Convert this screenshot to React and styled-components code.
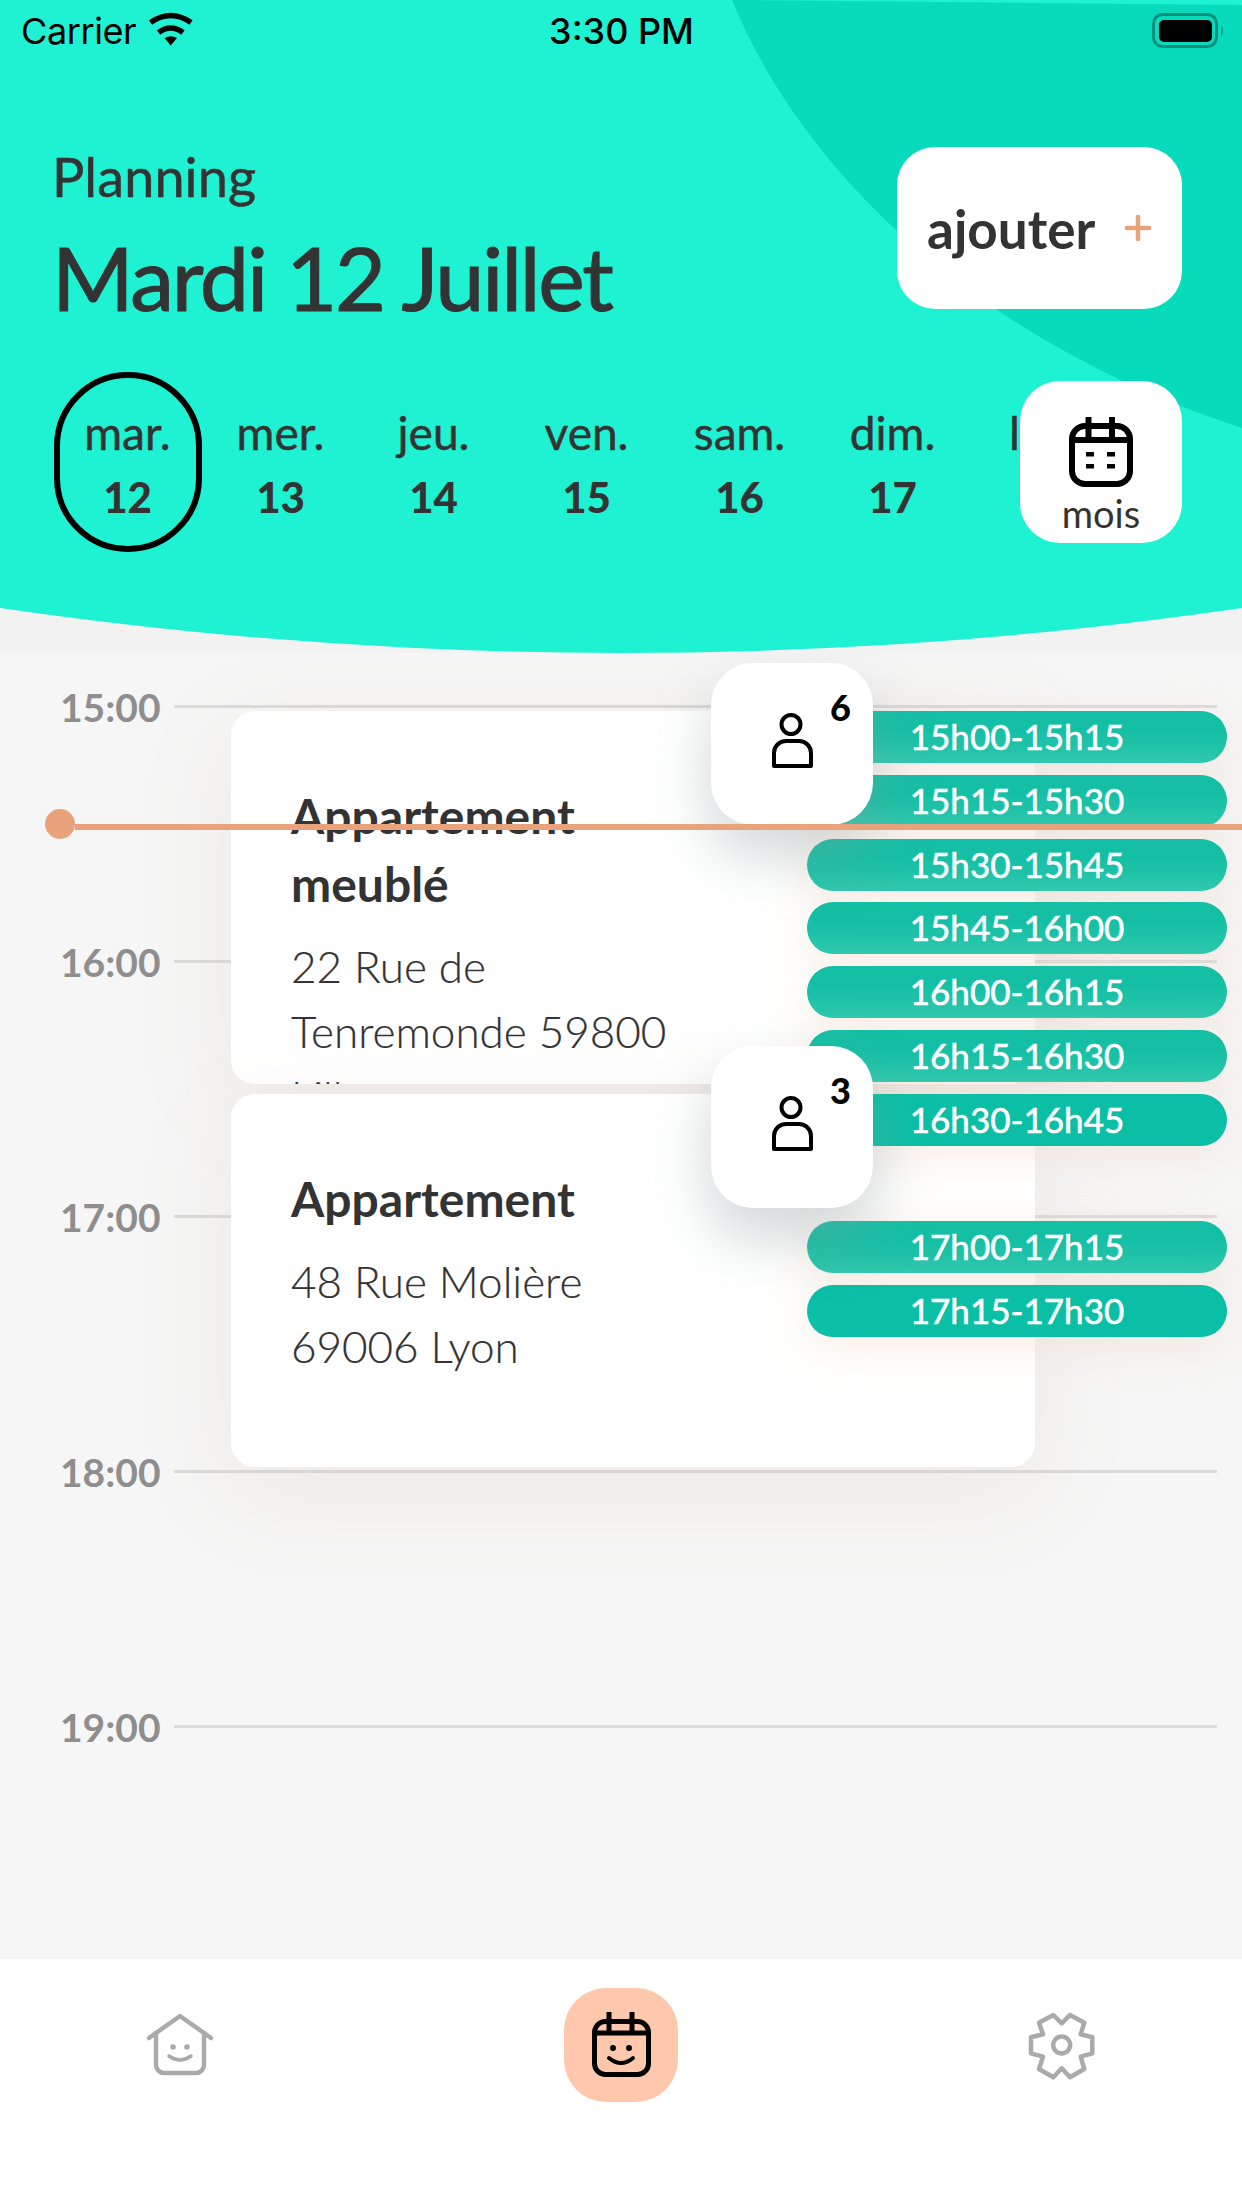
import React from "react";
import styled, { createGlobalStyle } from "styled-components";

const Global = createGlobalStyle`
  html, body { margin: 0; padding: 0; background: #f6f6f6; }
  * { box-sizing: border-box; }
  #root { width: 1242px; height: 2208px; }
`;

const Page = styled.div`
  width: 1242px;
  height: 2208px;
  display: flex;
  flex-direction: column;
  overflow: hidden;
  background: #f2f2f2;
  font-family: "Lato", "Noto Sans", sans-serif;
  color: #333;
`;

const Header = styled.header`
  position: relative;
  height: 653px;
  flex: none;
  background: #1ef2d2;
  clip-path: circle(4307px at 621px -3654px);
`;

const HeaderArc = styled.svg`
  position: absolute;
  top: 0;
  left: 0;
  width: 1242px;
  height: 652px;
`;

const HeaderContent = styled.div`
  position: relative;
  display: flex;
  flex-direction: column;
`;

const StatusBar = styled.div`
  height: 60px;
  display: grid;
  grid-template-columns: 1fr auto 1fr;
  align-items: center;
  padding: 2px 16px 0 17px;
  font-family: "Inter", "Liberation Sans", sans-serif;
  font-size: 36px;
  color: #000;
`;

const StatusLeft = styled.div`
  display: flex;
  align-items: center;
  gap: 17px;
  margin-left: 4px;
  letter-spacing: -0.4px;
`;

const StatusTime = styled.div`
  font-weight: 500;
`;

const StatusRight = styled.div`
  display: flex;
  justify-content: flex-end;
`;

const TopRow = styled.div`
  display: flex;
  justify-content: space-between;
  align-items: flex-start;
  height: 162px;
  margin-top: 87px;
  padding: 0 60px 0 52px;
`;

const Titles = styled.div`
  display: flex;
  flex-direction: column;
`;

const Overline = styled.div`
  font-size: 54px;
  line-height: 60px;
  letter-spacing: 0.1px;
  -webkit-text-stroke: 0.5px #333;
`;

const Heading = styled.h1`
  margin: 20px 0 0;
  font-size: 88px;
  line-height: 100px;
  font-weight: 400;
  letter-spacing: -2.2px;
  -webkit-text-stroke: 1.2px #333;
`;

const AddButton = styled.div`
  width: 285px;
  height: 162px;
  background: #fff;
  border-radius: 38px;
  display: flex;
  align-items: center;
  justify-content: space-between;
  padding: 0 30px;
  font-size: 53px;
  font-weight: 700;
`;

const DaysRow = styled.div`
  display: flex;
  align-items: center;
  margin-top: 63px;
  padding: 0 60px 0 51px;
  height: 180px;
`;

const DayStrip = styled.div`
  width: 969px;
  height: 180px;
  display: flex;
  overflow: hidden;
  flex: none;
`;

const DayCell = styled.div`
  flex: 0 0 153px;
  height: 180px;
  display: flex;
  align-items: center;
  justify-content: center;
`;

const DayPill = styled.div`
  width: 148px;
  height: 180px;
  border-radius: 74px;
  border: ${(p) => (p.$active ? "6px solid #000" : "6px solid transparent")};
  display: flex;
  flex-direction: column;
  align-items: center;
  justify-content: center;
  padding-top: 6px;
`;

const DayName = styled.div`
  font-size: 46px;
  line-height: 64px;
  font-weight: 400;
  -webkit-text-stroke: 0.5px #333;
`;

const DayNum = styled.div`
  font-size: 42px;
  line-height: 64px;
  font-weight: 900;
`;

const MonthButton = styled.div`
  width: 162px;
  height: 162px;
  flex: none;
  background: #fff;
  border-radius: 40px;
  display: flex;
  flex-direction: column;
  align-items: center;
  padding-top: 36px;
`;

const MonthLabel = styled.div`
  font-size: 38px;
  line-height: 40px;
  margin-top: 6px;
`;

const Timeline = styled.main`
  position: relative;
  flex: none;
  height: 1306px;
  background: #f6f6f6;
  overflow: hidden;
  padding: 34px 25px 0 60px;
`;

const HourRow = styled.div`
  height: 255px;
  display: flex;
  align-items: flex-start;
`;

const HourLabel = styled.div`
  flex: 0 0 114px;
  font-size: 39px;
  line-height: 40px;
  font-weight: 700;
  color: #8e8e8e;
`;

const HourLine = styled.div`
  flex: 1;
  height: 3px;
  margin-top: 18px;
  background: #dcdcdc;
`;

const EventCard = styled.article`
  position: absolute;
  left: 231px;
  top: ${(p) => p.$top}px;
  width: 804px;
  height: 373px;
  background: #fff;
  border-radius: 24px;
  box-shadow: 0 24px 100px rgba(170, 130, 100, 0.1);
  overflow: hidden;
  padding: 71px 0 0 60px;
`;

const EventTitle = styled.div`
  width: 400px;
  font-size: 48px;
  line-height: 68px;
  font-weight: 700;
`;

const EventAddress = styled.div`
  width: 400px;
  margin-top: 16px;
  font-size: 44px;
  line-height: 65px;
  font-weight: 300;
  -webkit-text-stroke: 0.2px #333;
`;

const SlotColumn = styled.div`
  position: absolute;
  left: 807px;
  top: 58px;
  width: 420px;
  display: grid;
  grid-auto-rows: 63.75px;
`;

const slotFill = {
  stacked: "linear-gradient(#14bfa5 35%, #2ac8ae)",
  solid: "#0abfa5",
};

const Slot = styled.div`
  height: 52px;
  border-radius: 26px;
  background: ${(p) => slotFill[p.$tone]};
  color: #fff;
  display: flex;
  align-items: center;
  justify-content: center;
  padding-bottom: 2px;
  font-size: 35px;
  font-weight: 400;
  -webkit-text-stroke: 0.6px #fff;
  box-shadow: 0 10px 40px rgba(238, 215, 195, 0.42);
  visibility: ${(p) => (p.$empty ? "hidden" : "visible")};
`;

const GuestBadge = styled.div`
  position: absolute;
  left: 711px;
  top: ${(p) => p.$top}px;
  width: 162px;
  height: 162px;
  background: #fff;
  border-radius: 42px;
  box-shadow: 0 30px 60px rgba(140, 155, 155, 0.4);
  padding: 46px 0 0 58px;
`;

const GuestCount = styled.span`
  position: absolute;
  left: 119px;
  top: 24px;
  font-size: 36px;
  line-height: 40px;
  font-weight: 900;
  color: #000;
`;

const NowLine = styled.div`
  position: absolute;
  left: 75px;
  right: 0;
  top: 171px;
  height: 6px;
  background: #e8a27c;
`;

const NowDot = styled.span`
  position: absolute;
  left: -30px;
  top: -15px;
  width: 30px;
  height: 30px;
  border-radius: 50%;
  background: #e8a27c;
`;

const TabBar = styled.nav`
  flex: 1;
  background: #fff;
  display: flex;
  justify-content: space-between;
  align-items: flex-start;
  padding: 29px 145px 0;
`;

const TabIcon = styled.svg`
  margin-top: ${(p) => p.$offset}px;
  flex: none;
`;

const ActiveTab = styled.div`
  width: 114px;
  height: 114px;
  background: #ffc8ac;
  border-radius: 42px;
  display: flex;
  align-items: center;
  justify-content: center;
`;

const WifiIcon = styled.svg`
  margin: -4px -14px 0 -14px;
  flex: none;
`;

const Wifi = () => (
  <WifiIcon width="70" height="50" viewBox="0 0 70 50">
    <g fill="none" stroke="#000" strokeWidth="5.6">
      <path d="M11.5 18.5 Q31.7 4.5 52 18.5" />
      <path d="M19.5 28.5 Q31.7 19.5 44 28.5" />
    </g>
    <path d="M25.5 34 Q31.7 30.5 38 34 L31.7 41.5 Z" fill="#000" />
  </WifiIcon>
);

const Battery = () => (
  <svg width="76" height="36" viewBox="0 0 76 36">
    <rect x="3.5" y="1.5" width="63" height="32" rx="9" fill="none" stroke="#0a8f7d" strokeWidth="3" />
    <rect x="9" y="7" width="53" height="22" rx="5" fill="#000" />
    <path d="M71 12 Q75 17.5 71 24 Z" fill="#0a8f7d" />
  </svg>
);

const Plus = () => (
  <svg width="28" height="28" viewBox="0 0 28 28" fill="none" stroke="#e8a27c" strokeWidth="4.5" strokeLinecap="round">
    <path d="M14 3V25M3 14H25" />
  </svg>
);

const MonthIcon = () => (
  <svg width="64" height="70" viewBox="0 0 64 70" fill="none" stroke="#000" strokeWidth="6">
    <rect x="3" y="9" width="58" height="58" rx="13" />
    <path d="M19.5 0V23M43 0V23M3 23H61" />
    <g fill="#000" stroke="none">
      <rect x="17" y="35" width="8" height="4.5" />
      <rect x="38" y="35" width="8" height="4.5" />
      <rect x="17" y="47" width="8" height="4.5" />
      <rect x="38" y="47" width="8" height="4.5" />
    </g>
  </svg>
);

const Person = () => (
  <svg width="48" height="62" viewBox="0 0 48 62" fill="none" stroke="#000" strokeWidth="4" strokeLinejoin="round">
    <circle cx="22" cy="15.5" r="9.5" />
    <path d="M5 57V44a12 12 0 0 1 12-12H30a12 12 0 0 1 12 12V57Z" />
  </svg>
);

const HomeIcon = () => (
  <TabIcon $offset={24} width="70" height="66" viewBox="0 0 70 66" fill="none" stroke="#aaa" strokeWidth="4.5" strokeLinecap="round" strokeLinejoin="round">
    <path d="M4 26L35 4L66 26" />
    <path d="M11 21V53a8 8 0 0 0 8 8H51a8 8 0 0 0 8-8V21" />
    <circle cx="28" cy="35" r="2.8" fill="#aaa" stroke="none" />
    <circle cx="42" cy="35" r="2.8" fill="#aaa" stroke="none" />
    <path d="M24 44Q35 52 46 44" strokeWidth="3.5" />
  </TabIcon>
);

const CalendarSmile = () => (
  <svg width="64" height="70" viewBox="0 0 64 70" fill="none" stroke="#000" strokeWidth="5">
    <rect x="5.5" y="11.5" width="54" height="53" rx="11" />
    <path d="M20 2V23M43 2V23M5.5 23H59.5" />
    <circle cx="24" cy="38" r="3" fill="#000" stroke="none" />
    <circle cx="40" cy="38" r="3" fill="#000" stroke="none" />
    <path d="M20 48Q32 58 44 48" strokeWidth="4" strokeLinecap="round" />
  </svg>
);

const GearIcon = () => (
  <TabIcon $offset={22} width="70" height="70" viewBox="0 0 70 70" fill="none" stroke="#aaa" strokeWidth="4.5" strokeLinejoin="round">
    <path d="M26.3 5L34.7 13.3L43 5L57.3 12.7L53.7 24.3L65.3 27.3V43.3L53.7 46.7L57.3 59L43 67.3L34.7 58.3L26.3 67.3L12 59L16 46.7L4 43.3V27.3L16 24.3L12 12.7Z" />
    <circle cx="34.7" cy="35" r="8.5" />
  </TabIcon>
);

const days = [
  ["mar.", "12"],
  ["mer.", "13"],
  ["jeu.", "14"],
  ["ven.", "15"],
  ["sam.", "16"],
  ["dim.", "17"],
  ["lun.", "18"],
];
const hours = ["15:00", "16:00", "17:00", "18:00", "19:00"];
const slots = [
  { label: "15h00-15h15", tone: "stacked" },
  { label: "15h15-15h30", tone: "stacked" },
  { label: "15h30-15h45", tone: "stacked" },
  { label: "15h45-16h00", tone: "stacked" },
  { label: "16h00-16h15", tone: "stacked" },
  { label: "16h15-16h30", tone: "stacked" },
  { label: "16h30-16h45", tone: "solid" },
  { label: "", tone: "solid" },
  { label: "17h00-17h15", tone: "stacked" },
  { label: "17h15-17h30", tone: "solid" },
];

export default function App() {
  return (
    <Page>
      <Global />
      <Header>
        <HeaderArc viewBox="0 0 1242 652">
          <path d="M732 0L1242 5V428C1000 350 810 190 732 0Z" fill="#08dbbb" />
        </HeaderArc>
        <HeaderContent>
          <StatusBar>
            <StatusLeft>
              Carrier
              <Wifi />
            </StatusLeft>
            <StatusTime>3:30 PM</StatusTime>
            <StatusRight>
              <Battery />
            </StatusRight>
          </StatusBar>
          <TopRow>
            <Titles>
              <Overline>Planning</Overline>
              <Heading>Mardi 12 Juillet</Heading>
            </Titles>
            <AddButton>
              ajouter
              <Plus />
            </AddButton>
          </TopRow>
          <DaysRow>
            <DayStrip>
              {days.map(([name, num], i) => (
                <DayCell key={num}>
                  <DayPill $active={i === 0}>
                    <DayName>{name}</DayName>
                    <DayNum>{num}</DayNum>
                  </DayPill>
                </DayCell>
              ))}
            </DayStrip>
            <MonthButton>
              <MonthIcon />
              <MonthLabel>mois</MonthLabel>
            </MonthButton>
          </DaysRow>
        </HeaderContent>
      </Header>
      <Timeline>
        {hours.map((h) => (
          <HourRow key={h}>
            <HourLabel>{h}</HourLabel>
            <HourLine />
          </HourRow>
        ))}
        <EventCard $top={58}>
          <EventTitle>Appartement meublé</EventTitle>
          <EventAddress>22 Rue de Tenremonde 59800 Lille</EventAddress>
        </EventCard>
        <EventCard $top={441}>
          <EventTitle>Appartement</EventTitle>
          <EventAddress>48 Rue Molière 69006 Lyon</EventAddress>
        </EventCard>
        <SlotColumn>
          {slots.map((s, i) => (
            <Slot key={i} $tone={s.tone} $empty={!s.label}>
              {s.label}
            </Slot>
          ))}
        </SlotColumn>
        <GuestBadge $top={10}>
          <Person />
          <GuestCount>6</GuestCount>
        </GuestBadge>
        <GuestBadge $top={393}>
          <Person />
          <GuestCount>3</GuestCount>
        </GuestBadge>
        <NowLine>
          <NowDot />
        </NowLine>
      </Timeline>
      <TabBar>
        <HomeIcon />
        <ActiveTab>
          <CalendarSmile />
        </ActiveTab>
        <GearIcon />
      </TabBar>
    </Page>
  );
}
